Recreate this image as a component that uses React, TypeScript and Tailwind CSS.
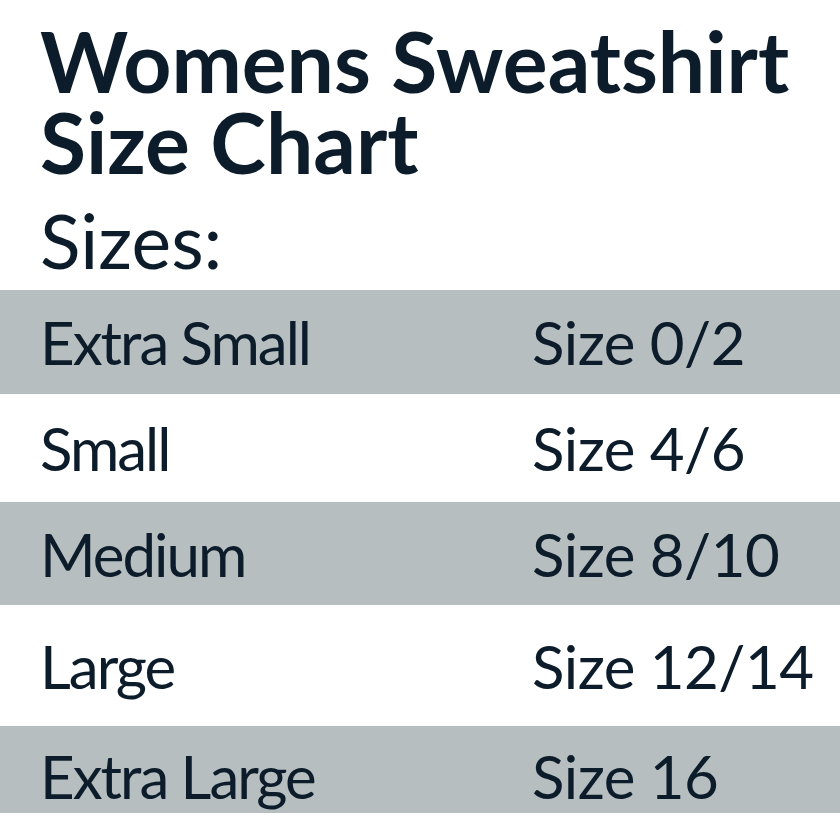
const rows = [
  { label: "Extra Small", size: "Size 0/2", gray: true, h: "h-[104px]", pad: "pt-0" },
  { label: "Small", size: "Size 4/6", gray: false, h: "h-[108px]", pad: "pt-0" },
  { label: "Medium", size: "Size 8/10", gray: true, h: "h-[103px]", pad: "pt-0" },
  { label: "Large", size: "Size 12/14", gray: false, h: "h-[121px]", pad: "pt-0" },
  { label: "Extra Large", size: "Size 16", gray: true, h: "h-[87px]", pad: "pt-[12px]" },
];

export default function App() {
  return (
    <div className="h-[840px] w-[840px] overflow-hidden bg-white font-['Lato',sans-serif] text-[#0c1c2a]">
      <div className="px-10 pt-[20px]">
        <h1 className="text-[84px] font-bold leading-[81px]">
          <div>Womens Sweatshirt</div>
          <div>Size Chart</div>
        </h1>
        <p className="mt-[18px] text-[75px] leading-[80px]">Sizes:</p>
      </div>
      <div className="mt-[10px]">
        {rows.map((r) => (
          <div
            key={r.label}
            className={`flex items-center ${r.h} ${r.pad} ${r.gray ? "bg-[#b7bec0]" : "bg-white"} text-[60px] leading-none`}
          >
            <span className="w-[532px] pl-10 tracking-[-2px]">{r.label}</span>
            <span className="tracking-[-0.5px]">{r.size}</span>
          </div>
        ))}
      </div>
    </div>
  );
}
